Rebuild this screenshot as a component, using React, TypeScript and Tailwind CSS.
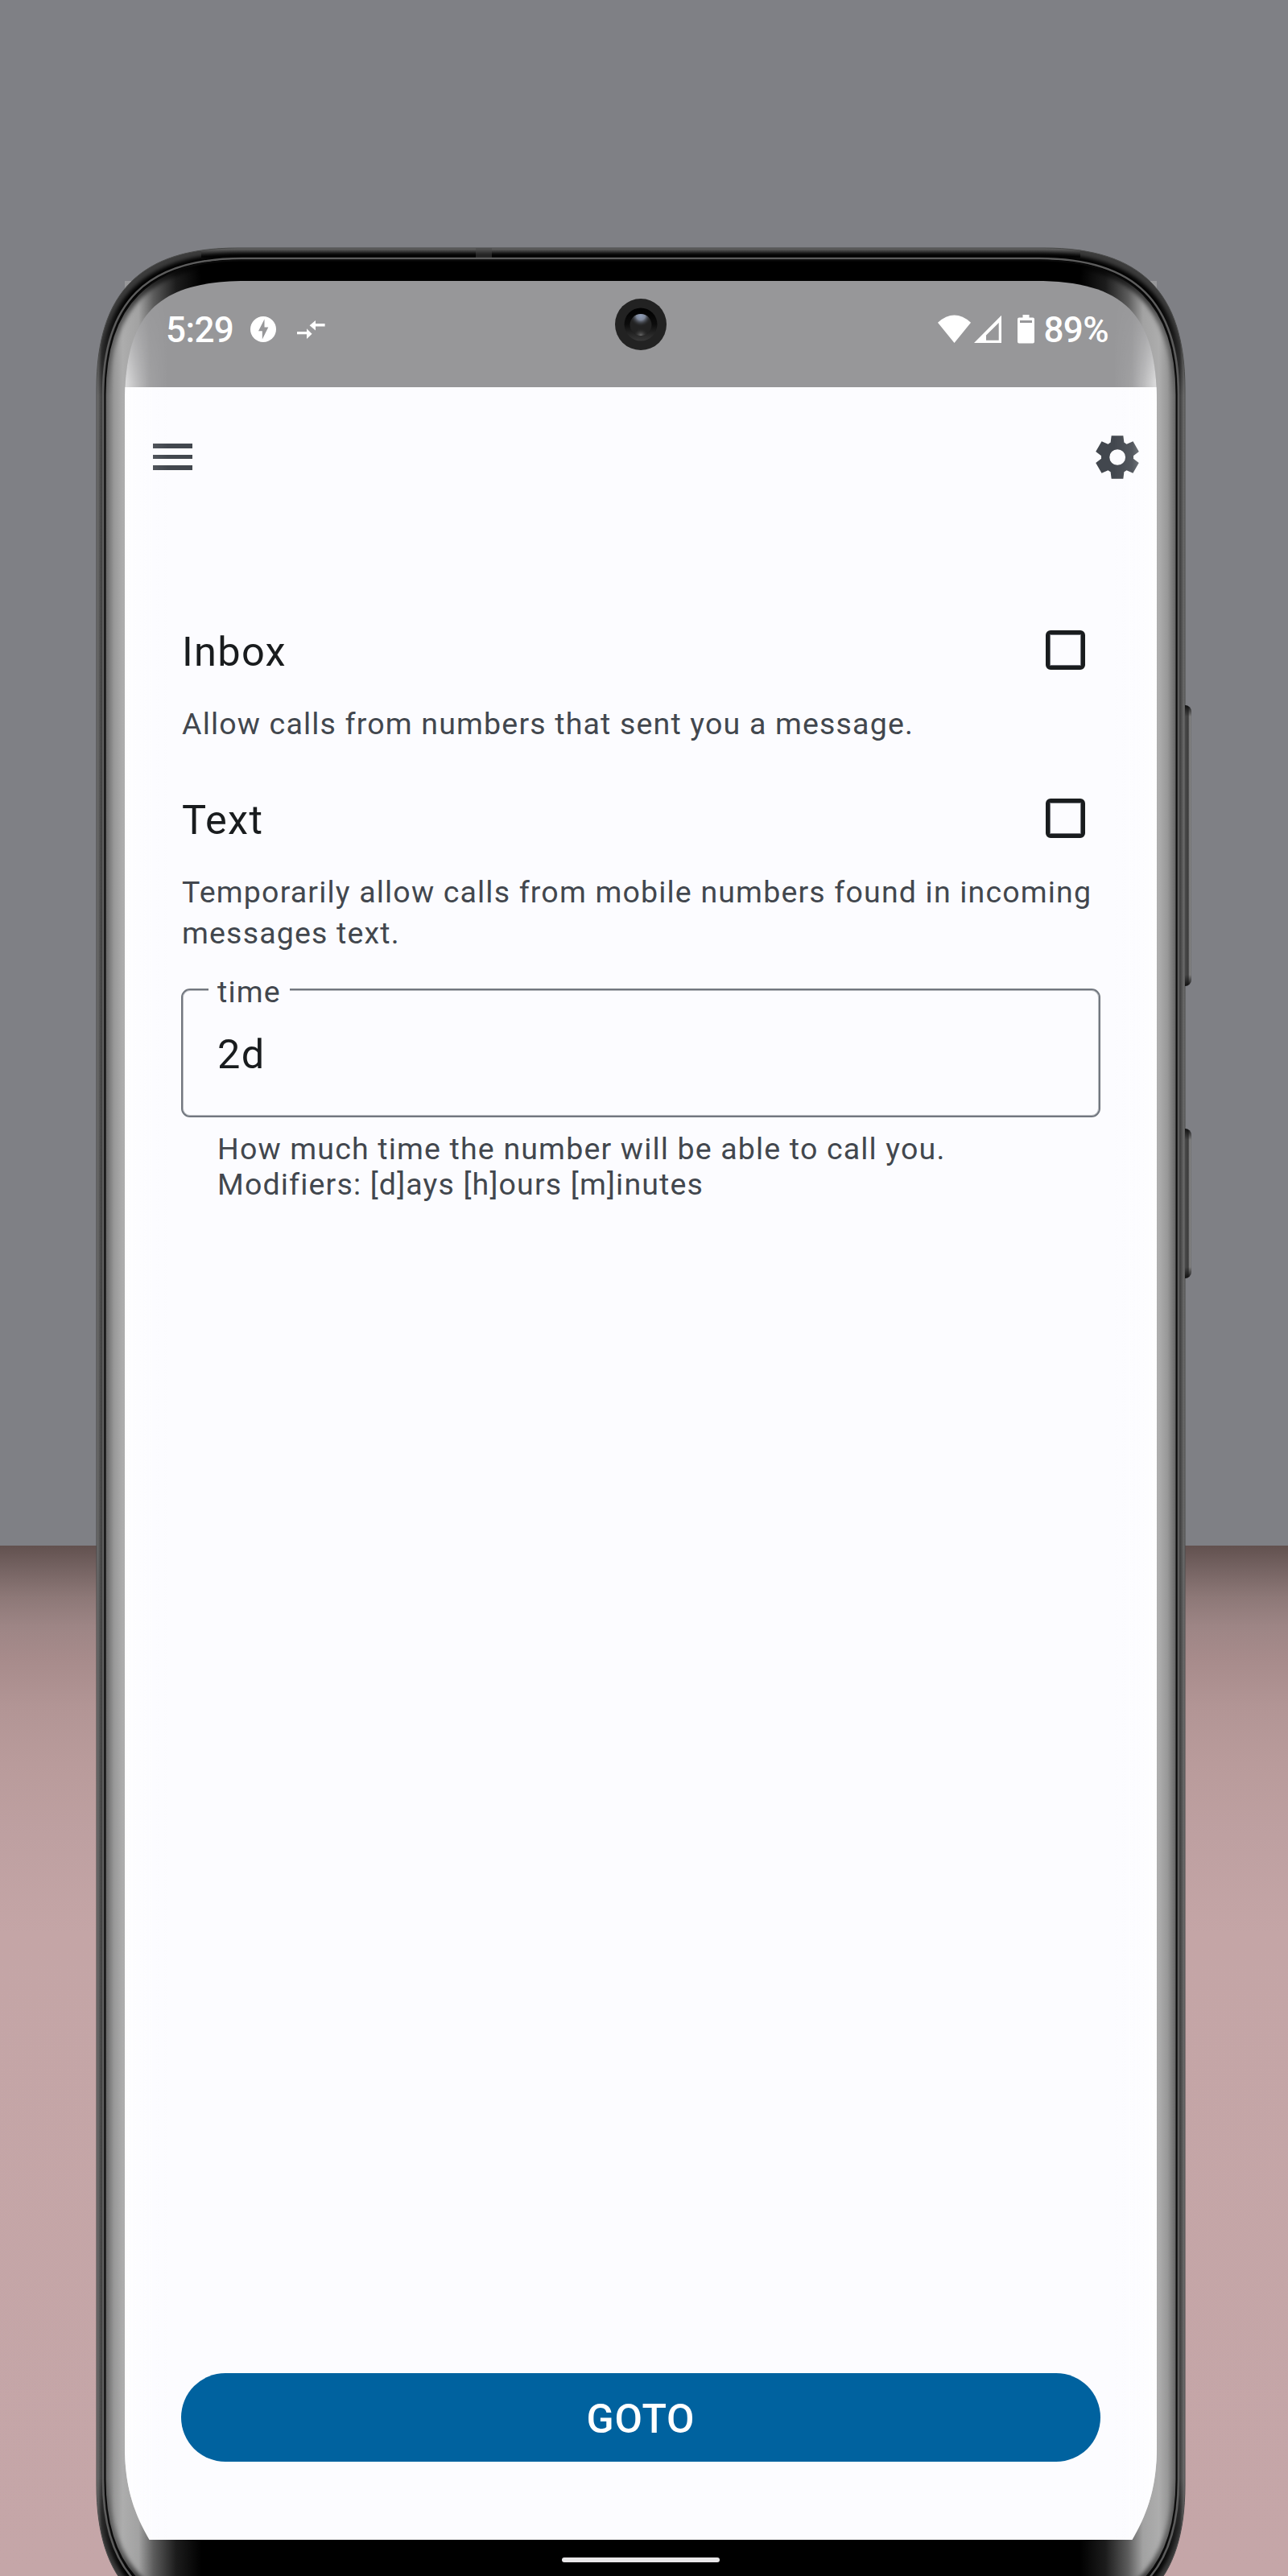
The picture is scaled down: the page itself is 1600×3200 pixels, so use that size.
import React from "react";

const OUTER =
  "M120 483C120 363 175 308 295 308H1297C1417 308 1472 363 1472 483V3087C1472 3207 1417 3262 1297 3262H295C175 3262 120 3207 120 3087Z";
const RIM =
  "M128 490C128 377 181 321 301 321H1291C1411 321 1464 377 1464 490V3080C1464 3194 1411 3250 1291 3250H301C181 3250 128 3194 128 3080Z";
const GLASS =
  "M130.500 490C130.500 380 184 323.500 301 323.500H1291C1408 323.500 1461.500 380 1461.500 490V3080C1461.500 3191 1408 3247 1291 3247H301C184 3247 130.500 3191 130.500 3080Z";
const SCREEN =
  "M155 500C155 390 196 349 306 349H1286C1396 349 1437 390 1437 500V3040C1437 3090 1425 3123 1406.500 3155H185.500C167 3123 155 3090 155 3040Z";

/** Metal rim and curved glass edge of the handset. */
function DeviceFrame() {
  return (
    <svg
      className="pointer-events-none absolute left-0 top-0 h-[3200px] w-[1600px]"
      viewBox="0 0 1600 3200"
      fill="none"
    >
      <defs>
        <linearGradient id="metal" gradientUnits="userSpaceOnUse" x1="120" y1="0" x2="1472" y2="0">
          <stop offset="0" stopColor="#757575" />
          <stop offset="0.0048" stopColor="#3c3c3c" />
          <stop offset="0.9952" stopColor="#3c3c3c" />
          <stop offset="1" stopColor="#757575" />
        </linearGradient>
        <linearGradient id="metalTop" gradientUnits="userSpaceOnUse" x1="0" y1="308" x2="0" y2="319">
          <stop offset="0" stopColor="#6a6a6a" />
          <stop offset="1" stopColor="#0c0c0c" />
        </linearGradient>
        <linearGradient id="glass" gradientUnits="userSpaceOnUse" x1="131" y1="0" x2="1461" y2="0">
          <stop offset="0" stopColor="#626262" />
          <stop offset="0.008" stopColor="#989898" />
          <stop offset="0.016" stopColor="#adadad" />
          <stop offset="0.031" stopColor="#a2a2a2" />
          <stop offset="0.045" stopColor="#5c5c5c" />
          <stop offset="0.066" stopColor="#1c1c1c" />
          <stop offset="0.09" stopColor="#000" />
          <stop offset="0.91" stopColor="#000" />
          <stop offset="0.934" stopColor="#1c1c1c" />
          <stop offset="0.955" stopColor="#5c5c5c" />
          <stop offset="0.969" stopColor="#a2a2a2" />
          <stop offset="0.984" stopColor="#adadad" />
          <stop offset="0.992" stopColor="#989898" />
          <stop offset="1" stopColor="#626262" />
        </linearGradient>
        <linearGradient id="sheen" gradientUnits="userSpaceOnUse" x1="155" y1="0" x2="1437" y2="0">
          <stop offset="0" stopColor="#fff" stopOpacity="0.72" />
          <stop offset="0.012" stopColor="#fff" stopOpacity="0.38" />
          <stop offset="0.024" stopColor="#fff" stopOpacity="0.1" />
          <stop offset="0.042" stopColor="#fff" stopOpacity="0" />
          <stop offset="0.958" stopColor="#fff" stopOpacity="0" />
          <stop offset="0.976" stopColor="#fff" stopOpacity="0.1" />
          <stop offset="0.988" stopColor="#fff" stopOpacity="0.38" />
          <stop offset="1" stopColor="#fff" stopOpacity="0.72" />
        </linearGradient>
        <linearGradient id="sheenFade" gradientUnits="userSpaceOnUse" x1="0" y1="375" x2="0" y2="475">
          <stop offset="0" stopColor="#fff" stopOpacity="0.15" />
          <stop offset="1" stopColor="#fff" />
        </linearGradient>
        <linearGradient id="cornerFade" gradientUnits="userSpaceOnUse" x1="0" y1="308" x2="0" y2="3262">
          <stop offset="0" stopColor="#fff" />
          <stop offset="0.022" stopColor="#fff" />
          <stop offset="0.062" stopColor="#000" />
          <stop offset="0.938" stopColor="#000" />
          <stop offset="0.978" stopColor="#fff" />
          <stop offset="1" stopColor="#fff" />
        </linearGradient>
        <mask id="sheenMask" maskUnits="userSpaceOnUse" x="0" y="0" width="1600" height="3200">
          <rect width="1600" height="3200" fill="url(#sheenFade)" />
        </mask>
        <mask id="cornerMask" maskUnits="userSpaceOnUse" x="0" y="0" width="1600" height="3300">
          <rect width="1600" height="3300" fill="url(#cornerFade)" />
        </mask>
        <clipPath id="outerClip"><path d={OUTER} /></clipPath>
        <clipPath id="glassClip"><path d={GLASS} /></clipPath>
        <filter id="soft" filterUnits="userSpaceOnUse" x="0" y="0" width="1600" height="3300">
          <feGaussianBlur stdDeviation="2.500" />
        </filter>
        <mask id="hole" maskUnits="userSpaceOnUse" x="0" y="0" width="1600" height="3300">
          <rect width="1600" height="3300" fill="#fff" />
          <path d={SCREEN} fill="#000" />
        </mask>
      </defs>
      <g mask="url(#hole)">
        <path d={OUTER} fill="url(#metal)" />
        <g clipPath="url(#outerClip)">
          <rect x="250" y="308" width="1092" height="12" fill="url(#metalTop)" />
          <g mask="url(#cornerMask)">
            <path d={RIM} stroke="#000" strokeWidth="13" filter="url(#soft)" />
          </g>
          <rect x="591" y="308" width="20" height="12" fill="#454545" opacity="0.5" />
        </g>
        <path d={OUTER} stroke="#4a4a4a" strokeWidth="1" />
        <path d={GLASS} fill="url(#glass)" />
        <g clipPath="url(#glassClip)" mask="url(#cornerMask)">
          <path d={GLASS} stroke="#000" strokeOpacity="0.6" strokeWidth="12" filter="url(#soft)" />
        </g>
        <path d={RIM} stroke="#5c5c5c" strokeWidth="2.500" />
        <path d={GLASS} stroke="#0a0a0a" strokeWidth="2" />
      </g>
      <path d={SCREEN} fill="url(#sheen)" mask="url(#sheenMask)" opacity="0.95" />
    </svg>
  );
}

function Camera() {
  return (
    <svg className="absolute left-[609px] top-[22px] h-16 w-16" viewBox="0 0 64 64">
      <defs>
        <linearGradient id="ring" x1="0" y1="0" x2="0" y2="1">
          <stop offset="0" stopColor="#000" />
          <stop offset="0.500" stopColor="#0c0c0c" />
          <stop offset="1" stopColor="#383838" />
        </linearGradient>
        <radialGradient id="lensTop" cx="0.500" cy="0.080" r="0.500">
          <stop offset="0" stopColor="#8f9db8" />
          <stop offset="0.400" stopColor="#7d8698" />
          <stop offset="1" stopColor="#222" stopOpacity="0" />
        </radialGradient>
        <radialGradient id="lensBottom" cx="0.500" cy="1" r="0.350">
          <stop offset="0" stopColor="#707070" />
          <stop offset="1" stopColor="#222" stopOpacity="0" />
        </radialGradient>
      </defs>
      <circle cx="32" cy="32" r="32" fill="#222" />
      <circle cx="32" cy="32" r="20.500" fill="url(#ring)" />
      <circle cx="32" cy="32.500" r="13.500" fill="#222" />
      <circle cx="32" cy="32.500" r="13.500" fill="url(#lensTop)" />
      <circle cx="32" cy="32.500" r="13.500" fill="url(#lensBottom)" />
    </svg>
  );
}

function StatusBar() {
  return (
    <div className="relative flex h-[132px] shrink-0 items-start bg-[#979799] pl-[51px] pr-[60px] pt-[35px] text-[44px] font-medium leading-[53px] tracking-[-0.600px] text-white">
      <span className="w-[84px] whitespace-nowrap">5:29</span>
      <svg className="ml-[21px] mt-[9px] h-8 w-8" viewBox="0 0 32 32">
        <circle cx="16" cy="16" r="16" fill="#fff" />
        <path d="M17.500 3.500L10 18.300H14.800V28.500L22.300 13.500H17.500Z" fill="#979799" />
      </svg>
      <svg className="ml-[26px] mt-[13px] h-6 w-[35px]" viewBox="0 0 35 24" fill="#fff">
        <path d="M0 15H12V11.200L18.600 17.700L12 24V18.300H0ZM34.600 5H23V1L15.600 7.200L23 13.500V8.500H34.600Z" />
      </svg>
      <svg className="ml-auto mt-[7px] h-9 w-[121px]" viewBox="0 0 121 36" fill="#fff">
        <path d="M0 9.700Q20.500-8.500 41 9.700L20.500 35Z" />
        <path fillRule="evenodd" d="M79 .7V35H45ZM75.700 10L60 25.500V31.700H75.700Z" />
        <path
          fillRule="evenodd"
          d="M105.500 0H113.500V3.500H118Q120 3.500 120 5.500V33.500Q120 35.500 118 35.500H101Q99 35.500 99 33.500V5.500Q99 3.500 101 3.500H105.500ZM102 7V10H117V7Z"
        />
      </svg>
      <span className="ml-[10px]">89%</span>
      <Camera />
    </div>
  );
}

function TopBar() {
  return (
    <header className="flex h-[172px] shrink-0 items-center justify-between pl-[35px] pr-[17px] pt-px">
      <div className="flex flex-col gap-[8px]">
        <div className="h-[5.500px] w-[49px] bg-[#42474e]" />
        <div className="h-[5.500px] w-[49px] bg-[#42474e]" />
        <div className="h-[5.500px] w-[49px] bg-[#42474e]" />
      </div>
      <svg className="h-16 w-16" viewBox="0 -960 960 960" fill="#42474e">
        <path d="m370-80-16-128q-13-5-24.500-12T307-235l-119 50L78-375l103-78q-1-7-1-13.500v-27q0-6.500 1-13.500L78-585l110-190 119 50q11-8 23-15t24-12l16-128h220l16 128q13 5 24.500 12t22.500 15l119-50 110 190-103 78q1 7 1 13.500v27q0 6.500-2 13.500l103 78-110 190-118-50q-11 8-23 15t-24 12L590-80H370Zm112-252q61 0 105-43t44-105-44-105-105-43q-62 0-105 43t-43 105 43 105 105 43Z" />
      </svg>
    </header>
  );
}

function OptionRow({ title }: { title: string }) {
  return (
    <div className="flex h-[55px] items-start justify-between pl-px pr-[19px]">
      <h2 className="text-[50.500px] leading-[55px] tracking-[1.300px] text-[#191c1e]">{title}</h2>
      <div className="mt-px h-[49px] w-[49px] rounded-[6px] border-[5px] border-[#191c1e] shadow-[inset_0_0_0_1px_#70727a]" />
    </div>
  );
}

export default function App() {
  return (
    <div className="relative flex h-[3200px] w-[1600px] flex-col overflow-hidden bg-[#7f8085] font-['Roboto',sans-serif]">
      <div className="absolute inset-x-0 bottom-0 top-[1920px] bg-[linear-gradient(180deg,#62514f_0px,#766463_30px,#8d7877_64px,#9d8585_100px,#a78b8b_140px,#b29595_200px,#b99b9b_270px,#bea0a1_360px,#c4a5a6_480px,#c5a6a8_1280px)]" />

      <main className="relative ml-[155px] mt-[349px] flex h-[2806px] w-[1282px] flex-col bg-[#fcfcff]">
        <StatusBar />
        <TopBar />
        <section className="mt-[129px] px-[70px]">
          <OptionRow title="Inbox" />
          <p className="mt-[37px] pl-px text-[37.500px] leading-[51px] tracking-[1.170px] text-[#42474e]">
            Allow calls from numbers that sent you a message.
          </p>
          <div className="mt-[66px]">
            <OptionRow title="Text" />
          </div>
          <p className="mt-[37px] whitespace-nowrap pl-px text-[37.500px] leading-[51px] tracking-[1.170px] text-[#42474e]">
            Temporarily allow calls from mobile numbers found in incoming
            <br />
            messages text.
          </p>
          <div className="relative mt-[43px] flex h-[160px] items-center rounded-[11px] border-[2px] border-[#72777f] pl-[43px] pt-[3px] shadow-[inset_0_0_0_1px_#b9bcc1]">
            <span className="absolute left-[32px] top-[-20px] h-[44px] bg-[#fcfcff] px-[11px] text-[37.500px] leading-[44px] tracking-[1.170px] text-[#42474e]">
              time
            </span>
            <span className="text-[50.500px] leading-[55px] tracking-[1.400px] text-[#191c1e]">2d</span>
          </div>
          <p className="mt-[17px] pl-[45px] text-[37.500px] leading-[44px] tracking-[1.170px] text-[#42474e]">
            How much time the number will be able to call you.
            <br />
            Modifiers: [d]ays [h]ours [m]inutes
          </p>
        </section>
        <button className="mx-[70px] mb-[97px] mt-auto h-[110px] rounded-full bg-[#00629f] pt-[4px] text-[50px] font-medium leading-none tracking-[0.800px] text-white">
          GOTO
        </button>
      </main>

      <DeviceFrame />
      <nav className="relative flex flex-1 justify-center pr-[8px] pt-[22px]">
        <div className="h-[6px] w-[196px] rounded-full bg-[#e8e6e8]" />
      </nav>

      <div className="absolute left-[1472px] top-[876px] h-[349px] w-2 rounded-r-lg bg-[linear-gradient(180deg,#111_0,transparent_14px,transparent_335px,#111_349px),linear-gradient(90deg,#4a4a4a_0,#3c3c3c_4px,#8a8a8a_6px,#6c6c6e_8px)]" />
      <div className="absolute left-[1472px] top-[1402px] h-[186px] w-2 rounded-r-lg bg-[linear-gradient(180deg,#111_0,transparent_14px,transparent_172px,#111_186px),linear-gradient(90deg,#4a4a4a_0,#3c3c3c_4px,#8a8a8a_6px,#6c6c6e_8px)]" />
    </div>
  );
}
